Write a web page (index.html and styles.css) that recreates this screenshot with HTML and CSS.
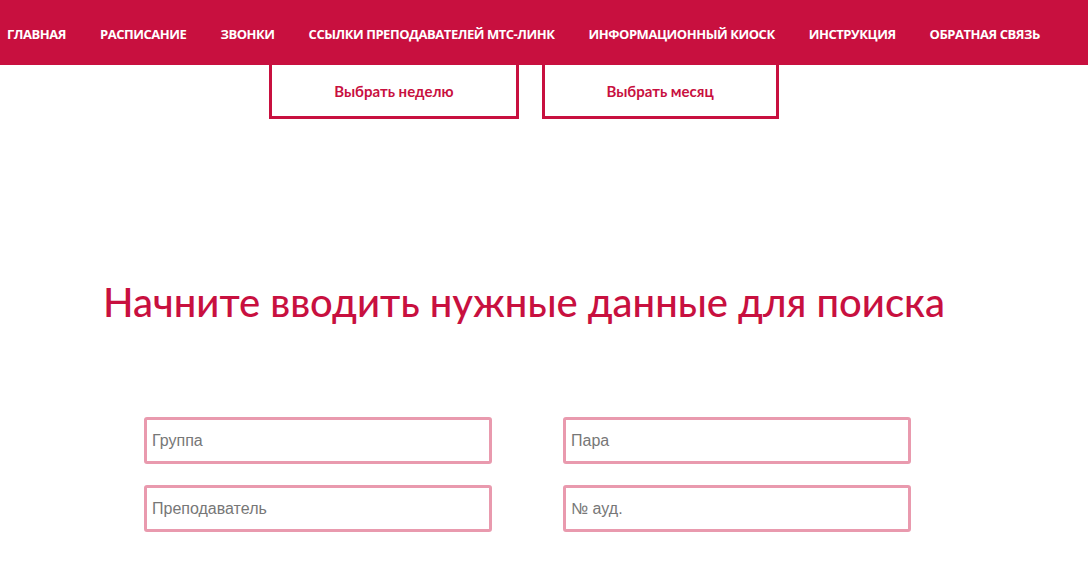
FILE: index.html
```html
<!DOCTYPE html>
<html lang="ru">
<head>
<meta charset="UTF-8">
<meta name="viewport" content="width=device-width, initial-scale=1.0">
<title>Расписание</title>
<link rel="stylesheet" href="styles.css">
</head>
<body>

<header class="topbar">
  <nav class="menu">
    <a href="#">Главная</a>
    <a href="#">Расписание</a>
    <a href="#">Звонки</a>
    <a href="#">Ссылки преподавателей МТС-Линк</a>
    <a href="#">Информационный киоск</a>
    <a href="#">Инструкция</a>
    <a href="#">Обратная связь</a>
  </nav>
</header>

<div class="page">
  <div class="period-switch">
    <button type="button" class="period-btn">Выбрать неделю</button>
    <button type="button" class="period-btn">Выбрать месяц</button>
  </div>

  <h1 class="search-title">Начните вводить нужные данные для поиска</h1>

  <form class="search-form">
    <input type="text" placeholder="Группа">
    <input type="text" placeholder="Пара">
    <input type="text" placeholder="Преподаватель">
    <input type="text" placeholder="№ ауд.">
  </form>
</div>

</body>
</html>
```

FILE: styles.css
```css
body {
  margin: 0;
  padding: 0;
  background-color: #fff;
  font-family: "Noto Sans", Arial, sans-serif;
}

.topbar {
  height: 65px;
  background-color: #c8103f;
  display: flex;
  align-items: center;
}

.menu {
  display: flex;
  gap: 34px;
  padding-left: 7px;
  padding-top: 2px;
}

.menu a {
  color: #fff;
  text-decoration: none;
  text-transform: uppercase;
  font-family: "Open Sans", Arial, sans-serif;
  font-weight: bold;
  font-size: 13px;
  letter-spacing: -0.46px;
}

.page {
  width: 1048px;
}

.period-switch {
  display: flex;
  justify-content: center;
  gap: 23px;
}

.period-btn {
  height: 54px;
  padding: 0 62px;
  background: #fff;
  border: 3px solid #c8103f;
  border-top: none;
  color: #c8103f;
  font-family: Lato, "Noto Sans", sans-serif;
  font-weight: bold;
  font-size: 15px;
  cursor: pointer;
}

.search-title {
  margin: 160px 0 0;
  text-align: center;
  color: #c8103f;
  font-family: Lato, "Noto Sans", sans-serif;
  font-weight: 500;
  font-size: 40px;
  line-height: 46px;
}

.search-form {
  display: grid;
  grid-template-columns: 348px 348px;
  column-gap: 71px;
  row-gap: 21px;
  margin: 92px 0 0 144px;
}

.search-form input {
  box-sizing: border-box;
  height: 47px;
  padding: 0 5px;
  border: 3px solid #e99aae;
  border-radius: 3px;
  font-family: "Liberation Sans", Arial, sans-serif;
  font-size: 16px;
  color: #333;
  outline: none;
}

.search-form input::placeholder {
  color: #777;
}
```
